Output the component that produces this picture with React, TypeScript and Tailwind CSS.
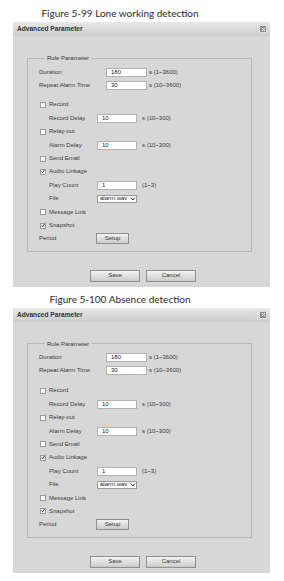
import React from 'react';

const Checkbox: React.FC<{ checked?: boolean }> = ({ checked }) => (
  <span className="ml-[1px] mr-[3px] flex h-[6px] w-[6px] items-center justify-center border border-[#9a9a9a] bg-white">
    {checked && (
      <svg viewBox="0 0 8 8" className="h-[7px] w-[7px] -mt-[1px]">
        <path d="M1 4.2 L3 6.6 L7 1" fill="none" stroke="#111" strokeWidth="1.7" />
      </svg>
    )}
  </span>
);

const TextBox: React.FC<{ value: string; wide?: boolean }> = ({ value, wide }) => (
  <div className={`flex h-[9px] items-center border border-[#b0b0b0] bg-white pl-[4px] text-[6px] text-[#222] ${wide ? 'w-[41px]' : 'w-[40px]'}`}>
    {value}
  </div>
);

const CheckRow: React.FC<{ label: string; checked?: boolean }> = ({ label, checked }) => (
  <div className="flex h-[13.4px] items-center">
    <Checkbox checked={checked} />
    <span>{label}</span>
  </div>
);

const SubRow: React.FC<{ label: string; value: string; hint: string }> = ({ label, value, hint }) => (
  <div className="flex h-[13.4px] items-center pl-[10px]">
    <span className="w-[48px]">{label}</span>
    <TextBox value={value} />
    <span className="ml-[5px]">{hint}</span>
  </div>
);

const GrayButton: React.FC<{ label: string; className?: string }> = ({ label, className }) => (
  <div
    className={`flex items-center justify-center border border-[#8f8f8f] bg-gradient-to-b from-[#f4f4f4] to-[#cbcbcb] text-[6px] text-[#333] ${className ?? ''}`}
  >
    {label}
  </div>
);

const Dialog: React.FC = () => (
  <div className="ml-[13px] w-[257px] bg-[#d7d7d7] font-['Liberation_Sans',Arial,sans-serif] text-[6px] text-[#3a3a3a]">
    <div className="flex h-[14px] items-center justify-between bg-gradient-to-b from-[#e8e8e8] to-[#cdcdcd] pl-[4px] pr-[3px]">
      <span className="text-[6.6px] font-bold text-[#333]">Advanced Parameter</span>
      <span className="flex h-[8px] w-[8px] items-center justify-center border border-[#dcdcdc] bg-[#8c8c8c]">
        <svg viewBox="0 0 6 6" className="h-[5px] w-[5px]">
          <path d="M1 1 L5 5 M5 1 L1 5" stroke="#f2f2f2" strokeWidth="1.2" />
        </svg>
      </span>
    </div>

    <div className="pb-[5px] pt-[18px]">
      <fieldset className="ml-[14px] w-[225px] border border-[#b8b8b8] pb-[5.3px] pl-[11px] pt-[3.5px]">
        <legend className="ml-[6px] h-[8px] px-[2px] leading-[8px] text-[#333]">Rule Parameter</legend>

        <div className="flex h-[13px] items-center">
          <span className="w-[67px]">Duration</span>
          <TextBox value="180" wide />
          <span className="ml-[2px]">s (1~3600)</span>
        </div>
        <div className="flex h-[13px] items-center">
          <span className="w-[67px]">Repeat Alarm Time</span>
          <TextBox value="30" wide />
          <span className="ml-[2px]">s (10~3600)</span>
        </div>

        <div className="mt-[6.8px]">
          <CheckRow label="Record" />
          <SubRow label="Record Delay" value="10" hint="s (10~300)" />
          <CheckRow label="Relay-out" />
          <SubRow label="Alarm Delay" value="10" hint="s (10~300)" />
          <CheckRow label="Send Email" />
          <CheckRow label="Audio Linkage" checked />
          <SubRow label="Play Count" value="1" hint="(1~3)" />
          <div className="flex h-[13.4px] items-center pl-[10px]">
            <span className="w-[48px]">File</span>
            <div className="flex h-[8px] w-[40px] items-center gap-[3px] border border-[#9a9a9a] bg-white pl-[2px] text-[6px] text-[#222]">
              <span>alarm.wav</span>
              <svg viewBox="0 0 8 6" className="h-[4px] w-[6px]">
                <path d="M1 1 L4 4.5 L7 1" fill="none" stroke="#222" strokeWidth="1.4" />
              </svg>
            </div>
          </div>
          <CheckRow label="Message Link" />
          <CheckRow label="Snapshot" checked />
          <div className="flex h-[13.4px] items-center">
            <span className="w-[57px]">Period</span>
            <GrayButton label="Setup" className="h-[11px] w-[33px]" />
          </div>
        </div>
      </fieldset>

      <div className="mt-[18px] flex justify-center gap-[6px] pl-[3px]">
        <GrayButton label="Save" className="h-[12px] w-[50px]" />
        <GrayButton label="Cancel" className="h-[12px] w-[50px]" />
      </div>
    </div>
  </div>
);

const Caption: React.FC<{ text: string; top: string }> = ({ text, top }) => (
  <div className={`w-[240px] text-center font-['Lato','Open_Sans',sans-serif] text-[10px] leading-[18px] text-[#2a2a2a] ${top}`}>
    {text}
  </div>
);

export default function App() {
  return (
    <div className="h-[581px] w-[284px] overflow-hidden bg-white">
      <Caption text="Figure 5-99 Lone working detection" top="h-[22px] pt-[4px]" />
      <Dialog />
      <Caption text="Figure 5-100 Absence detection" top="h-[21px] pt-[3px]" />
      <Dialog />
    </div>
  );
}
